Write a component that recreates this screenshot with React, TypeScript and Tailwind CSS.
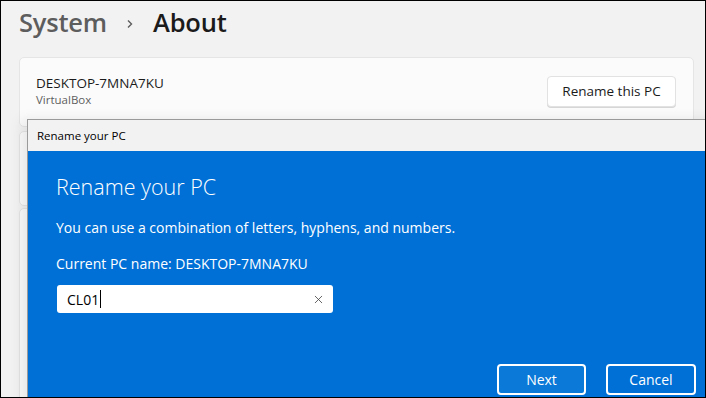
import { X } from "lucide-react";

const font = { fontFamily: '"Open Sans", "Noto Sans", sans-serif' };

function Card({ children, className = "" }: { children?: React.ReactNode; className?: string }) {
  return (
    <div className={`rounded-[5px] border border-[#e5e5e5] bg-[#fbfbfb] ${className}`}>{children}</div>
  );
}

export default function App() {
  return (
    <div
      className="relative h-[398px] w-[706px] overflow-hidden border border-black bg-[#f3f2f3] text-[#1b1b1b]"
      style={font}
    >
      <div className="flex flex-col pl-[18px]">
        {/* breadcrumb */}
        <div className="flex h-[42px] items-center gap-[18px] pt-[1px] text-[25.5px] font-semibold tracking-[-0.2px]">
          <span className="text-[#5d5d5d]">System</span>
          <svg width="10" height="10" viewBox="0 0 10 10" className="mt-[3px]">
            <path d="M3 1.5 L6.5 5 L3 8.5" fill="none" stroke="#5d5d5d" strokeWidth="1.4" />
          </svg>
          <span className="text-[#1b1b1b]">About</span>
        </div>

        <Card className="mt-[14px] flex h-[70px] w-[675px] items-start justify-between pl-[16px] pr-[17px] pt-[16px]">
          <div className="flex flex-col">
            <span className="text-[13.5px] leading-[18px]">DESKTOP-7MNA7KU</span>
            <span className="text-[11.5px] leading-[16px] text-[#5f5f5f]">VirtualBox</span>
          </div>
          <button className="mt-[2px] h-[31px] w-[129px] rounded-[4px] border border-[#e2e2e2] bg-white text-[13.5px] shadow-[0_1px_0_#d6d6d6]">
            Rename this PC
          </button>
        </Card>

        <Card className="mt-[4px] h-[75px] w-[675px]" />
        <Card className="mt-[2px] h-[220px] w-[675px]" />
      </div>

      {/* rename dialog window */}
      <div className="absolute left-[26px] top-[118px] flex h-[290px] w-[700px] flex-col border border-[#9a9a9a] shadow-[-6px_0_12px_rgba(0,0,0,0.08)]">
        <div className="flex h-[31px] items-center bg-[#f3f2f3] pl-[9px] text-[11.5px] text-black">Rename your PC</div>
        <div className="flex flex-1 flex-col bg-[#0070d6] pl-[28px] text-white">
          <div className="mt-[21px] text-[21.5px] font-light leading-[30px]">Rename your PC</div>
          <div className="mt-[16px] text-[14px] leading-[20px]">
            You can use a combination of letters, hyphens, and numbers.
          </div>
          <div className="mt-[16px] text-[14px] leading-[20px]">Current PC name: DESKTOP-7MNA7KU</div>
          <div className="ml-[1px] mt-[11px] flex h-[28px] w-[276px] items-center rounded-[3px] bg-white pl-[10px] pr-[8px] text-[14px] text-black">
            <span>CL01</span>
            <span className="ml-[1px] h-[18px] w-[1px] bg-black" />
            <X className="ml-auto h-[13px] w-[13px] text-[#444]" strokeWidth={1.5} />
          </div>
          <div className="mt-[51px] flex justify-start gap-[20px] pl-[441px]">
            <button className="h-[31px] w-[89px] rounded-[4px] border-2 border-white bg-[#0a79d8] text-[14px]">Next</button>
            <button className="h-[31px] w-[90px] rounded-[4px] border-2 border-white text-[14px]">Cancel</button>
          </div>
        </div>
      </div>
    </div>
  );
}
